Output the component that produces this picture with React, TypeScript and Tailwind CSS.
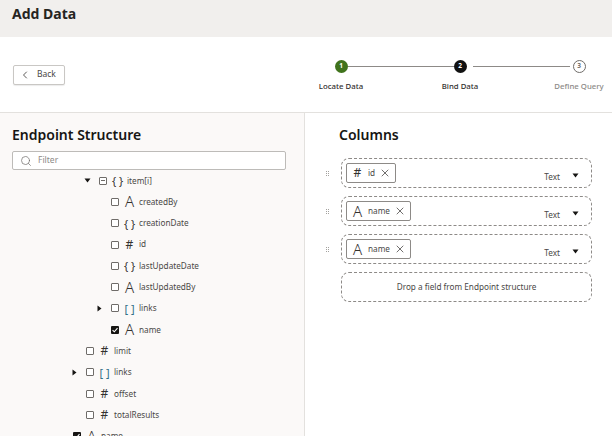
import { ChevronLeft, Search, X } from 'lucide-react';

type Kind = 'text' | 'num' | 'obj' | 'arr';

const steps = [
  { n: '1', label: 'Locate Data', circle: 'bg-[#40731c] text-white', text: 'text-[#33312f]' },
  { n: '2', label: 'Bind Data', circle: 'bg-[#111111] text-white', text: 'text-[#33312f]' },
  { n: '3', label: 'Define Query', circle: 'bg-white border border-[#6f6c69] text-[#6f6c69]', text: 'text-[#8d8a87]' },
];

const rows: { name: string; kind: Kind; indent: string; caret?: 'down' | 'right'; box?: 'minus' | 'checked' }[] = [
  { name: 'item[i]', kind: 'obj', indent: 'pl-[84px]', caret: 'down', box: 'minus' },
  { name: 'createdBy', kind: 'text', indent: 'pl-[96px]' },
  { name: 'creationDate', kind: 'obj', indent: 'pl-[96px]' },
  { name: 'id', kind: 'num', indent: 'pl-[96px]' },
  { name: 'lastUpdateDate', kind: 'obj', indent: 'pl-[96px]' },
  { name: 'lastUpdatedBy', kind: 'text', indent: 'pl-[96px]' },
  { name: 'links', kind: 'arr', indent: 'pl-[96px]', caret: 'right' },
  { name: 'name', kind: 'text', indent: 'pl-[96px]', box: 'checked' },
  { name: 'limit', kind: 'num', indent: 'pl-[71px]' },
  { name: 'links', kind: 'arr', indent: 'pl-[71px]', caret: 'right' },
  { name: 'offset', kind: 'num', indent: 'pl-[71px]' },
  { name: 'totalResults', kind: 'num', indent: 'pl-[71px]' },
  { name: 'name', kind: 'text', indent: 'pl-[58px]', box: 'checked' },
];

const columns: { name: string; kind: Kind; chip: string }[] = [
  { name: 'id', kind: 'num', chip: 'w-[50px]' },
  { name: 'name', kind: 'text', chip: 'w-[65px]' },
  { name: 'name', kind: 'text', chip: 'w-[65px]' },
];

function TypeIcon({ kind }: { kind: Kind }) {
  if (kind === 'text') return <span className="w-[11px] text-center text-[15px] leading-none font-light text-[#33312f]">A</span>;
  if (kind === 'num') return <span className="w-[11px] text-center text-[12px] leading-none text-[#33312f]">#</span>;
  if (kind === 'obj') return <span className="w-[11px] text-center text-[11px] leading-none whitespace-nowrap text-[#33312f]">{'{ }'}</span>;
  return <span className="w-[11px] text-center text-[11px] leading-none whitespace-nowrap text-[#2f6f86]">{'[ ]'}</span>;
}

function Caret({ dir }: { dir: 'down' | 'right' }) {
  return (
    <svg width="7" height="7" viewBox="0 0 7 7" className="fill-[#161513]">
      {dir === 'down' ? <path d="M0.5 1.5h6L3.5 5.5z" /> : <path d="M1.5 0.5v6L5.5 3.5z" />}
    </svg>
  );
}

function Checkbox({ state }: { state?: 'minus' | 'checked' }) {
  if (state === 'checked') {
    return (
      <span className="flex h-[8px] w-[8px] shrink-0 items-center justify-center rounded-[1px] bg-[#161513]">
        <svg width="8" height="8" viewBox="0 0 8 8" fill="none" stroke="white" strokeWidth="1.1">
          <path d="M1.6 4.1l1.7 1.7 3.2-3.6" />
        </svg>
      </span>
    );
  }
  return (
    <span className="flex h-[8px] w-[8px] shrink-0 items-center justify-center rounded-[1px] border border-[#6f6c69] bg-white">
      {state === 'minus' && <span className="h-px w-[4px] bg-[#6f6c69]" />}
    </span>
  );
}

function TreeRow({ row }: { row: (typeof rows)[number] }) {
  return (
    <div className={`flex h-[21.3px] shrink-0 items-center ${row.indent}`}>
      <span className="flex w-[15px] shrink-0 items-center">{row.caret && <Caret dir={row.caret} />}</span>
      <Checkbox state={row.box} />
      <span className="ml-[5px] flex w-[11px] justify-center"><TypeIcon kind={row.kind} /></span>
      <span className="ml-[4px] text-[8.2px] leading-none text-[#4a4846]">{row.name}</span>
    </div>
  );
}

export default function App() {
  return (
    <div className="flex h-[436px] w-[612px] flex-col overflow-hidden bg-white font-['Noto_Sans',sans-serif] text-[#161513]">
      <header className="flex h-[37px] shrink-0 items-center bg-[#f1efed] px-3 pb-[10px]">
        <h1 className="text-[14px] leading-none font-bold text-[#26241f]">Add Data</h1>
      </header>

      <div className="relative flex h-[76px] shrink-0 items-center border-b border-[#e3e1de] pl-[13px]">
        <button className="flex h-[20px] w-[52px] items-center rounded-[2px] border border-[#c9c7c4] bg-white pl-[5px] text-[8.5px] text-[#4a4846] shadow-[0_1px_1px_rgba(0,0,0,0.08)]">
          <ChevronLeft size={12} strokeWidth={1.6} className="text-[#33312f]" />
          <span className="ml-[6px]">Back</span>
        </button>
        <div className="absolute top-[23px] left-[281.5px] flex">
          {steps.map((s, i) => (
            <div key={s.n} className="flex w-[119px] flex-col items-center">
              <div className="flex w-full items-center">
                <span className="flex-1 basis-0">
                  {i > 0 && <span className={`block h-px bg-[#8d8a87] ${i === 2 ? 'mr-[3px]' : ''}`} />}
                </span>
                <span className={`flex h-[13px] w-[13px] shrink-0 items-center justify-center rounded-full text-[6.5px] leading-none font-bold ${s.circle}`}>{s.n}</span>
                <span className="flex-1 basis-0">
                  {i < 2 && <span className={`block h-px bg-[#8d8a87] ${i === 1 ? 'ml-[6px]' : ''}`} />}
                </span>
              </div>
              <span className={`mt-[7px] text-[7.8px] leading-[12px] font-medium whitespace-nowrap ${s.text}`}>{s.label}</span>
            </div>
          ))}
        </div>
      </div>

      <div className="flex min-h-0 flex-1">
        <aside className="flex w-[305px] shrink-0 flex-col overflow-hidden border-r border-[#e3e1de] bg-[#fbf9f8]">
          <h2 className="mt-[13px] ml-3 text-[14px] leading-[18px] font-semibold text-[#161513]">Endpoint Structure</h2>
          <div className="mt-[7px] ml-3 flex h-[19px] w-[274px] shrink-0 items-center rounded-[2px] border border-[#bdbbb8] bg-white pl-[7px]">
            <Search size={12} strokeWidth={1.4} className="text-[#6f6c69]" />
            <span className="ml-[6px] text-[8.5px] leading-none text-[#8d8a87]">Filter</span>
          </div>
          <div className="flex flex-col">
            {rows.map((r, i) => <TreeRow key={i} row={r} />)}
          </div>
        </aside>

        <main className="flex-1 pl-[20px]">
          <h2 className="mt-[13px] ml-[14px] text-[14px] leading-[18px] font-semibold text-[#161513]">Columns</h2>
          <div className="mt-[14px] flex flex-col gap-[8px]">
            {columns.map((c, i) => (
              <div key={i} className="flex items-center">
                <span className="w-[16px] pl-px">
                  <span className="grid w-[3px] grid-cols-2 gap-px">
                    {[0, 1, 2, 3, 4, 5].map((d) => <span key={d} className="h-px w-px bg-[#a3a19e]" />)}
                  </span>
                </span>
                <div className="flex h-[30px] w-[251px] items-start justify-between rounded-lg border border-dashed border-[#8d8a87] pt-[4px] pl-[4px]">
                  <div className={`flex h-[20px] items-center rounded-[2px] border border-[#8d8a87] bg-white pl-[5px] ${c.chip}`}>
                    <TypeIcon kind={c.kind} />
                    <span className="ml-[5px] text-[8.2px] leading-none text-[#4a4846]">{c.name}</span>
                    <X size={12} strokeWidth={1.4} className="ml-[4px] text-[#33312f]" />
                  </div>
                  <div className="mt-[8px] mr-[12px] flex items-center">
                    <span className="text-[8.2px] leading-[12px] text-[#4a4846]">Text</span>
                    <span className="mt-[-3px] ml-[12px] flex"><Caret dir="down" /></span>
                  </div>
                </div>
              </div>
            ))}
            <div className="ml-[16px] flex h-[30px] w-[251px] items-center justify-center rounded-lg border border-dashed border-[#8d8a87] text-[8.2px] text-[#4a4846]">
              Drop a field from Endpoint structure
            </div>
          </div>
        </main>
      </div>
    </div>
  );
}
